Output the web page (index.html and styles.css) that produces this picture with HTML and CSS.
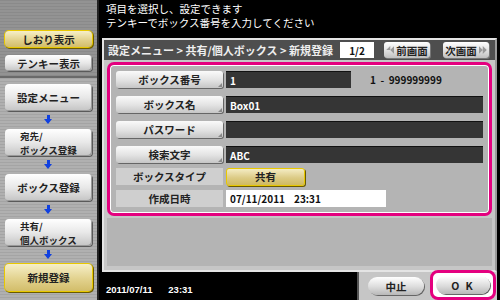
FILE: index.html
```html
<!DOCTYPE html>
<html lang="ja">
<head>
    <meta charset="UTF-8">
    <title>新規登録</title>
    <link rel="stylesheet" href="styles.css">
</head>
<body>
    <div class="screen">
        <div class="side">
            <div class="side-top">
                <div class="side-btn side-btn-on">しおり表示</div>
                <div class="side-btn">テンキー表示</div>
            </div>
            <div class="side-flow">
                <div class="side-btn side-btn-big">設定メニュー</div>
                <div class="arrow"></div>
                <div class="side-btn side-btn-big side-btn-2">宛先/<br>ボックス登録</div>
                <div class="arrow"></div>
                <div class="side-btn side-btn-big">ボックス登録</div>
                <div class="arrow"></div>
                <div class="side-btn side-btn-big side-btn-2">共有/<br>個人ボックス</div>
                <div class="arrow"></div>
                <div class="side-btn side-btn-big side-btn-on">新規登録</div>
            </div>
        </div>
        <div class="main">
            <div class="msg">
                <p>項目を選択し、設定できます</p>
                <p>テンキーでボックス番号を入力してください</p>
            </div>
            <div class="panel">
                <div class="crumb">
                    <span class="crumb-text">設定メニュー &gt; 共有/個人ボックス &gt; 新規登録</span>
                    <span class="page">1/2</span>
                    <span class="nav-btn"><i class="tri tri-l"></i>前画面</span>
                    <span class="nav-btn">次画面<i class="tri tri-r"></i></span>
                </div>
                <div class="form">
                    <div class="row">
                        <div class="label">ボックス番号</div>
                        <div class="field field-short">1</div>
                        <div class="hint">1&nbsp;&nbsp;-&nbsp;&nbsp;999999999</div>
                    </div>
                    <div class="row">
                        <div class="label">ボックス名</div>
                        <div class="field">Box01</div>
                    </div>
                    <div class="row">
                        <div class="label">パスワード</div>
                        <div class="field"></div>
                    </div>
                    <div class="row">
                        <div class="label">検索文字</div>
                        <div class="field">ABC</div>
                    </div>
                    <div class="row row-flat">
                        <div class="label label-flat">ボックスタイプ</div>
                        <div class="type-btn">共有</div>
                    </div>
                    <div class="row row-flat">
                        <div class="label label-flat">作成日時</div>
                        <div class="date-box">07/11/2011&nbsp;&nbsp;&nbsp;&nbsp;23:31</div>
                    </div>
                </div>
                <div class="blank"></div>
            </div>
            <div class="foot">
                <div class="clock">2011/07/11&nbsp;&nbsp;&nbsp;&nbsp;&nbsp;&nbsp;23:31</div>
                <div class="actions">
                    <div class="pill">中止</div>
                    <div class="ok-ring"><div class="pill pill-ok">O K</div></div>
                </div>
            </div>
        </div>
    </div>
</body>
</html>
```

FILE: styles.css
```css
body {
    margin: 0;
    background: #000;
    font-family: "Noto Sans CJK JP", "DejaVu Sans", sans-serif;
}

.screen {
    display: flex;
    width: 500px;
    height: 300px;
    overflow: hidden;
}

/* left column */
.side {
    width: 97px;
    display: flex;
    flex-direction: column;
    border-right: 2px solid #222;
}

.side-top {
    height: 78px;
    padding: 31px 5px 0 5px;
    box-sizing: border-box;
    display: flex;
    flex-direction: column;
    gap: 8px;
    background: repeating-linear-gradient(#8a8a8a 0 1px, #939393 1px 3px);
    border-bottom: 2px solid #6a6a6a;
}

.side-flow {
    flex: 1;
    padding: 6px 5px 0 5px;
    display: flex;
    flex-direction: column;
    background: repeating-linear-gradient(#a4a4a4 0 1px, #b0b0b0 1px 3px);
}

.side-btn {
    height: 16px;
    flex: none;
    display: flex;
    align-items: center;
    justify-content: center;
    font-size: 10.5px;
    font-weight: bold;
    color: #222;
    background: linear-gradient(#ffffff, #e8e8e8 50%, #c4c4c4);
    border-radius: 4px;
    box-shadow: 1px 1px 0 #5a5a5a, inset -1px -1px 0 #999;
}

.side-btn-big {
    height: 27px;
}

.side-btn-2 {
    font-size: 9.5px;
    line-height: 14px;
    justify-content: flex-start;
    padding-left: 15px;
}

.side-btn-on {
    background: linear-gradient(#f6efc8, #e2d28e 55%, #d2bd6a);
    box-shadow: 0 0 0 1px #e8c800, 1px 1px 0 1px #6a5a00;
}

.arrow {
    height: 18px;
    flex: none;
    position: relative;
}

.arrow::before {
    content: "";
    position: absolute;
    left: 42px;
    top: 4px;
    width: 3px;
    height: 4px;
    background: #1040e0;
}

.arrow::after {
    content: "";
    position: absolute;
    left: 39px;
    top: 8px;
    border-left: 4.5px solid transparent;
    border-right: 4.5px solid transparent;
    border-top: 5px solid #1040e0;
}

/* right area */
.main {
    flex: 1;
    display: flex;
    flex-direction: column;
    background: #000;
}

.msg {
    height: 38px;
    padding: 2px 0 0 7px;
    box-sizing: border-box;
    color: #fff;
    font-size: 10.5px;
    line-height: 14px;
}

.msg p {
    margin: 0;
}

.panel {
    margin-left: 3px;
    width: 395px;
    height: 234px;
    box-sizing: border-box;
    display: flex;
    flex-direction: column;
    background: #c6c6c6;
    border: 2px solid #e4e4e4;
    border-right-color: #9a9a9a;
    padding: 0 3px 4px 0;
}

.crumb {
    height: 20px;
    display: flex;
    align-items: center;
    background: #4e4e4e;
    color: #eee;
    font-size: 11px;
    font-weight: bold;
    padding-left: 4px;
    margin-right: -3px;
}

.crumb-text {
    width: 232px;
}

.page {
    width: 34px;
    height: 16px;
    background: #fff;
    color: #111;
    font-size: 10px;
    display: flex;
    align-items: center;
    justify-content: center;
    margin-right: 10px;
}

.nav-btn {
    width: 46px;
    height: 16px;
    margin-right: 13px;
    display: flex;
    align-items: center;
    justify-content: center;
    gap: 2px;
    background: linear-gradient(#fff, #dcdcdc 60%, #c0c0c0);
    color: #222;
    border-radius: 3px;
    font-size: 10.5px;
    box-shadow: 1px 1px 0 #777;
}

.nav-btn:last-child {
    margin-right: 0;
}

.tri {
    display: block;
    width: 8px;
    height: 8px;
    background: #999;
}

.tri-l {
    clip-path: polygon(0 50%, 50% 0, 50% 100%, 50% 50%, 100% 0, 100% 100%, 50% 50%, 0 50%);
}

.tri-r {
    clip-path: polygon(0 0, 50% 50%, 50% 0, 100% 50%, 50% 100%, 50% 50%, 0 100%);
}

.form {
    margin: 2px 0 0 3px;
    height: 154px;
    box-sizing: border-box;
    border: 3px solid #e4007f;
    border-radius: 7px;
    box-shadow: inset 0 0 0 1px #fff;
    background: #b4b4b4;
    padding: 6px 6px 0 6px;
    display: flex;
    flex-direction: column;
    gap: 8px;
}

.row {
    display: flex;
    align-items: center;
    height: 17px;
    flex: none;
    gap: 3px;
}

.row-flat {
    margin-top: -3px;
}

.label {
    width: 107px;
    height: 17px;
    display: flex;
    align-items: center;
    justify-content: center;
    font-size: 10.5px;
    font-weight: bold;
    color: #222;
    background: linear-gradient(#fafafa, #e2e2e2 55%, #c6c6c6);
    border-radius: 3px;
    box-shadow: 1px 1px 0 #666;
    position: relative;
}

.label::after {
    content: "";
    position: absolute;
    right: 1px;
    bottom: 1px;
    border-left: 4px solid transparent;
    border-bottom: 4px solid #888;
}

.label-flat {
    background: #cfcfcf;
    box-shadow: none;
    border-radius: 0;
}

.label-flat::after {
    display: none;
}

.field {
    flex: 1;
    height: 17px;
    box-sizing: border-box;
    background: #353535;
    border-top: 1px solid #111;
    color: #fff;
    font-size: 10px;
    font-weight: bold;
    padding-left: 4px;
    display: flex;
    align-items: center;
}

.field-short {
    flex: none;
    width: 125px;
}

.hint {
    margin-left: 16px;
    font-size: 10px;
    font-weight: bold;
    color: #111;
}

.type-btn {
    width: 77px;
    height: 16px;
    display: flex;
    align-items: center;
    justify-content: center;
    font-size: 10.5px;
    font-weight: bold;
    color: #222;
    background: linear-gradient(#f4ecc4, #dccb86 55%, #cfb960);
    border: 1px solid #e8c800;
    border-radius: 3px;
    box-shadow: 1px 1px 0 #6a5a00;
}

.date-box {
    width: 160px;
    height: 17px;
    background: #fff;
    color: #111;
    font-size: 10px;
    font-weight: bold;
    padding-left: 4px;
    box-sizing: border-box;
    display: flex;
    align-items: center;
}

.blank {
    flex: 1;
    margin: 2px 0 0 3px;
    background: #b4b4b4;
}

.foot {
    flex: 1;
    display: flex;
    justify-content: space-between;
}

.clock {
    color: #fff;
    font-family: "Liberation Sans", sans-serif;
    font-size: 9.5px;
    font-weight: bold;
    padding: 12px 0 0 7px;
}

.actions {
    width: 140px;
    margin-right: 3px;
    background: #c6c6c6;
    border-left: 2px solid #555;
    display: flex;
    align-items: center;
    gap: 6px;
    padding-left: 9px;
    box-sizing: border-box;
}

.pill {
    width: 56px;
    height: 18px;
    display: flex;
    align-items: center;
    justify-content: center;
    font-size: 10.5px;
    font-weight: bold;
    color: #222;
    background: linear-gradient(#fff, #dcdcdc 55%, #b8b8b8);
    border-radius: 10px;
    box-shadow: 1px 1px 0 #666;
}

.ok-ring {
    padding: 3px;
    border: 3px solid #e4007f;
    border-radius: 8px;
    background: #fff;
    margin-top: -2px;
}

.pill-ok {
    width: 54px;
    letter-spacing: 2px;
}
```
